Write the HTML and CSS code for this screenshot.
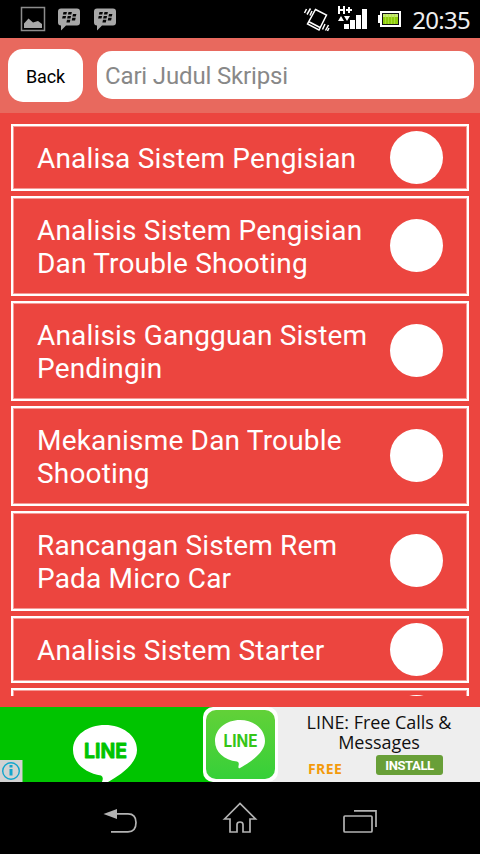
FILE: index.html
```html
<!DOCTYPE html>
<html lang="id">
<head>
<meta charset="utf-8">
<title>Cari Judul Skripsi</title>
<link rel="stylesheet" href="styles.css">
</head>
<body>
<div class="status">
  <svg class="notif" width="102" height="38" viewBox="20 0 102 38">
    <rect x="21.500" y="7.500" width="23" height="23" fill="none" stroke="#8c8c8c" stroke-width="1.500"/>
    <path d="M24 28V23.500L28.500 18.500L33 22.500L38 21L42 24V28Z" fill="#a8a8a8"/>
    <g id="bbm">
      <path d="M61 8.500H77Q80 8.500 80 11.500V22.500Q80 25.500 77 25.500H66L61 30.500V25.500Q58 25.500 58 22.500V11.500Q58 8.500 61 8.500Z" fill="#a8a8a8"/>
      <path d="M63.500 12h3.400l-.6 2.600h-3.400zM68.500 12h3.400l-.6 2.600h-3.400zM62.700 16h3.400l-.6 2.600h-3.400zM67.700 16h3.400l-.6 2.600h-3.400zM73 14h3.400l-.6 2.600h-3.400zM72.300 17.800h3.400l-.6 2.600h-3.400zM67 19.800h3.400l-.6 2.600h-3.400z" fill="#050505"/>
    </g>
    <use href="#bbm" x="36"/>
  </svg>
  <svg class="system" width="100" height="38" viewBox="303 0 100 38">
    <g fill="none" stroke="#fff" stroke-width="1.500">
      <path d="M315.500 9.500L326.500 15L319 30L307.500 24ZM308.500 21.500L320 27.500"/>
      <path d="M304.500 13L306.500 9M307 14.500L310.500 8.500M310 15.500L312 11M322.500 29.500L325 24M325.500 30.500L328.500 25M327.500 31L329 28"/>
    </g>
    <path d="M338 6h2v3h3V6h2v8h-2v-3h-3v3h-2zM348 7h2v2h2v2h-2v2h-2v-2h-2V9h2zM338 21l3-5 3 5zM344 16h6l-3 5zM344 24h5v5h-5zM350 20h5v9h-5zM356 15h5v14h-5zM362 9h5v20h-5z" fill="#fff"/>
    <path d="M380 11h21v16h-21v-4h-2v-8h2z" fill="#fff"/>
    <rect x="382" y="13" width="17" height="12" fill="#111"/>
    <rect x="383" y="14" width="15" height="10" fill="#8fce0c"/>
    <path d="M383 14h15v3h-15z" fill="#c6eb72"/>
    <path d="M385.500 14v10M388.500 14v10M391.500 14v10M394.500 14v10" stroke="#b4e34b" stroke-width=".7"/>
  </svg>
  <span class="clock">20:35</span>
</div>
<div class="header">
  <button class="back">Back</button>
  <div class="search">Cari Judul Skripsi</div>
</div>
<main class="panel">
  <div class="list">
    <div class="item"><span>Analisa Sistem Pengisian</span><i class="dot"></i></div>
    <div class="item"><span>Analisis Sistem Pengisian<br>Dan Trouble Shooting</span><i class="dot"></i></div>
    <div class="item"><span>Analisis Gangguan Sistem<br>Pendingin</span><i class="dot"></i></div>
    <div class="item"><span>Mekanisme Dan Trouble<br>Shooting</span><i class="dot"></i></div>
    <div class="item"><span>Rancangan Sistem Rem<br>Pada Micro Car</span><i class="dot"></i></div>
    <div class="item"><span>Analisis Sistem Starter</span><i class="dot"></i></div>
    <div class="item"><span></span><i class="dot"></i></div>
  </div>
</main>
<div class="ad">
  <div class="banner">
    <svg width="203" height="75" viewBox="0 0 203 75">
      <path d="M105 18C122 18 137 28 137 43C137 57 119 69 108 75H102Q104 70 101 68.500C85 66 73 56 73 43C73 28 88 18 105 18Z" fill="#fff"/>
      <text class="line-word" x="84" y="51" textLength="43" lengthAdjust="spacingAndGlyphs">LINE</text>
      <path d="M0 53h22.500v22H0z" fill="#d2d2d2"/>
      <circle cx="11" cy="64" r="8.300" fill="none" stroke="#12a5cc" stroke-width="1.400"/>
      <path d="M9.500 58h3v2.500h-3zM9.500 62h3v6.500h-3z" fill="#12a5cc"/>
    </svg>
  </div>
  <div class="app-icon">
    <svg width="75" height="75" viewBox="0 0 75 75">
      <defs><linearGradient id="g" x2="0" y2="1"><stop stop-color="#62d138"/><stop offset="1" stop-color="#36d039"/></linearGradient></defs>
      <rect width="75" height="75" rx="10" fill="#fff"/>
      <rect x="3" y="3" width="69" height="69" rx="10" fill="url(#g)"/>
      <path d="M37 13C51 13 62 22 62 34C62 46 46 56 37 61Q35 62 35.500 59Q36.500 55 34 54.500C21 53 12 45 12 34C12 22 23 13 37 13Z" fill="#fff"/>
      <text class="line-word small" x="20.500" y="40" textLength="34" lengthAdjust="spacingAndGlyphs">LINE</text>
    </svg>
  </div>
  <div class="ad-copy">
    <div class="ad-title">LINE: Free Calls &amp;<br>Messages</div>
    <div class="ad-actions"><span class="free">FREE</span><span class="install">INSTALL</span></div>
  </div>
</div>
<nav class="nav">
  <svg width="480" height="72" viewBox="0 0 480 72" fill="none" stroke="#b3b3b3" stroke-width="1.700">
    <path d="M111 49.800H128C134 49.800 136 46 136 40.500C136 35 134 31.800 128 31.800H116"/>
    <path d="M103.500 32L117 27V37Z" fill="#b3b3b3" stroke="none"/>
    <path d="M224.500 37L240 21.500L255.500 37H250V50H243V42.500Q243 40 240 40Q237 40 237 42.500V50H230V37Z"/>
    <rect x="344" y="34" width="28" height="16" rx="1"/>
    <path d="M354 28.800H376V45"/>
  </svg>
</nav>
</body>
</html>
```
FILE: styles.css
```css
* { box-sizing: border-box; }
body {
  margin: 0;
  width: 480px;
  height: 854px;
  overflow: hidden;
  display: flex;
  flex-direction: column;
  background: #000;
  font-family: Roboto, sans-serif;
}
svg { display: block; flex: none; }
.status {
  height: 38px;
  flex: none;
  display: flex;
  align-items: center;
  padding: 0 10px 0 20px;
  background: #000;
}
.system { margin-left: 181px; }
.clock {
  margin-left: auto;
  padding-top: 1px;
  color: #eee;
  font: 24px/37px "Noto Sans", sans-serif;
  letter-spacing: -0.7px;
}
.header {
  height: 75px;
  flex: none;
  display: flex;
  gap: 14px;
  align-items: center;
  padding: 0 6px 1px 8px;
  background: #e8695e;
}
.back {
  width: 75px;
  height: 53px;
  padding: 2px 0 0;
  border: 0;
  border-radius: 15px;
  background: #fff;
  color: #000;
  font: 18px Roboto, sans-serif;
  letter-spacing: -0.1px;
}
.search {
  flex: 1;
  height: 48px;
  padding-left: 8px;
  border-radius: 15px;
  background: #fff;
  color: #888;
  font-size: 24px;
  line-height: 50px;
  letter-spacing: -0.15px;
}
.panel {
  height: 594px;
  flex: none;
  padding: 11px;
  background: #ec453f;
}
.list {
  height: 572px;
  overflow: hidden;
  display: flex;
  flex-direction: column;
  gap: 5px;
}
.item {
  flex: none;
  display: flex;
  align-items: center;
  justify-content: space-between;
  height: 67px;
  padding: 0 24px;
  border: 2px solid #fff;
  box-shadow: inset 0 0 0 1px #f59a96;
  color: #fff;
  font-size: 28px;
  line-height: 33px;
  letter-spacing: 0.18px;
  white-space: nowrap;
}
.item:has(br) { height: 100px; }
.item:has(br) .dot { margin-top: -1px; }
.item span { padding-top: 2px; }
.dot {
  width: 53px;
  height: 53px;
  flex: none;
  border-radius: 50%;
  background: #fff;
}
.ad {
  height: 75px;
  flex: none;
  display: flex;
  background: #eee;
}
.banner { background: #00c400; }
.app-icon { background: linear-gradient(90deg, #00c400 50%, #eee 50%); }
.line-word {
  fill: #00c400;
  stroke: #00c400;
  stroke-width: 0.8px;
  stroke-linejoin: round;
  font: bold 20px Inter, sans-serif;
}
.line-word.small {
  font-size: 17px;
  fill: #36c518;
  stroke: none;
}
.ad-copy { flex: 1; padding-top: 5px; }
.ad-title {
  text-align: center;
  color: #111;
  font: 18px/20px "Open Sans", sans-serif;
  letter-spacing: -0.05px;
}
.ad-actions { display: flex; align-items: flex-start; padding: 3px 0 0 30px; }
.free {
  width: 68px;
  color: #f39a0b;
  font: bold 14px/28px "Open Sans", sans-serif;
  letter-spacing: 0.4px;
}
.install {
  width: 67px;
  height: 20px;
  border-radius: 3px;
  background: #689f38;
  color: #fff;
  text-align: center;
  font: bold 13px/21px Roboto, sans-serif;
  letter-spacing: -0.4px;
}
.nav { height: 72px; flex: none; background: #000; }
```
